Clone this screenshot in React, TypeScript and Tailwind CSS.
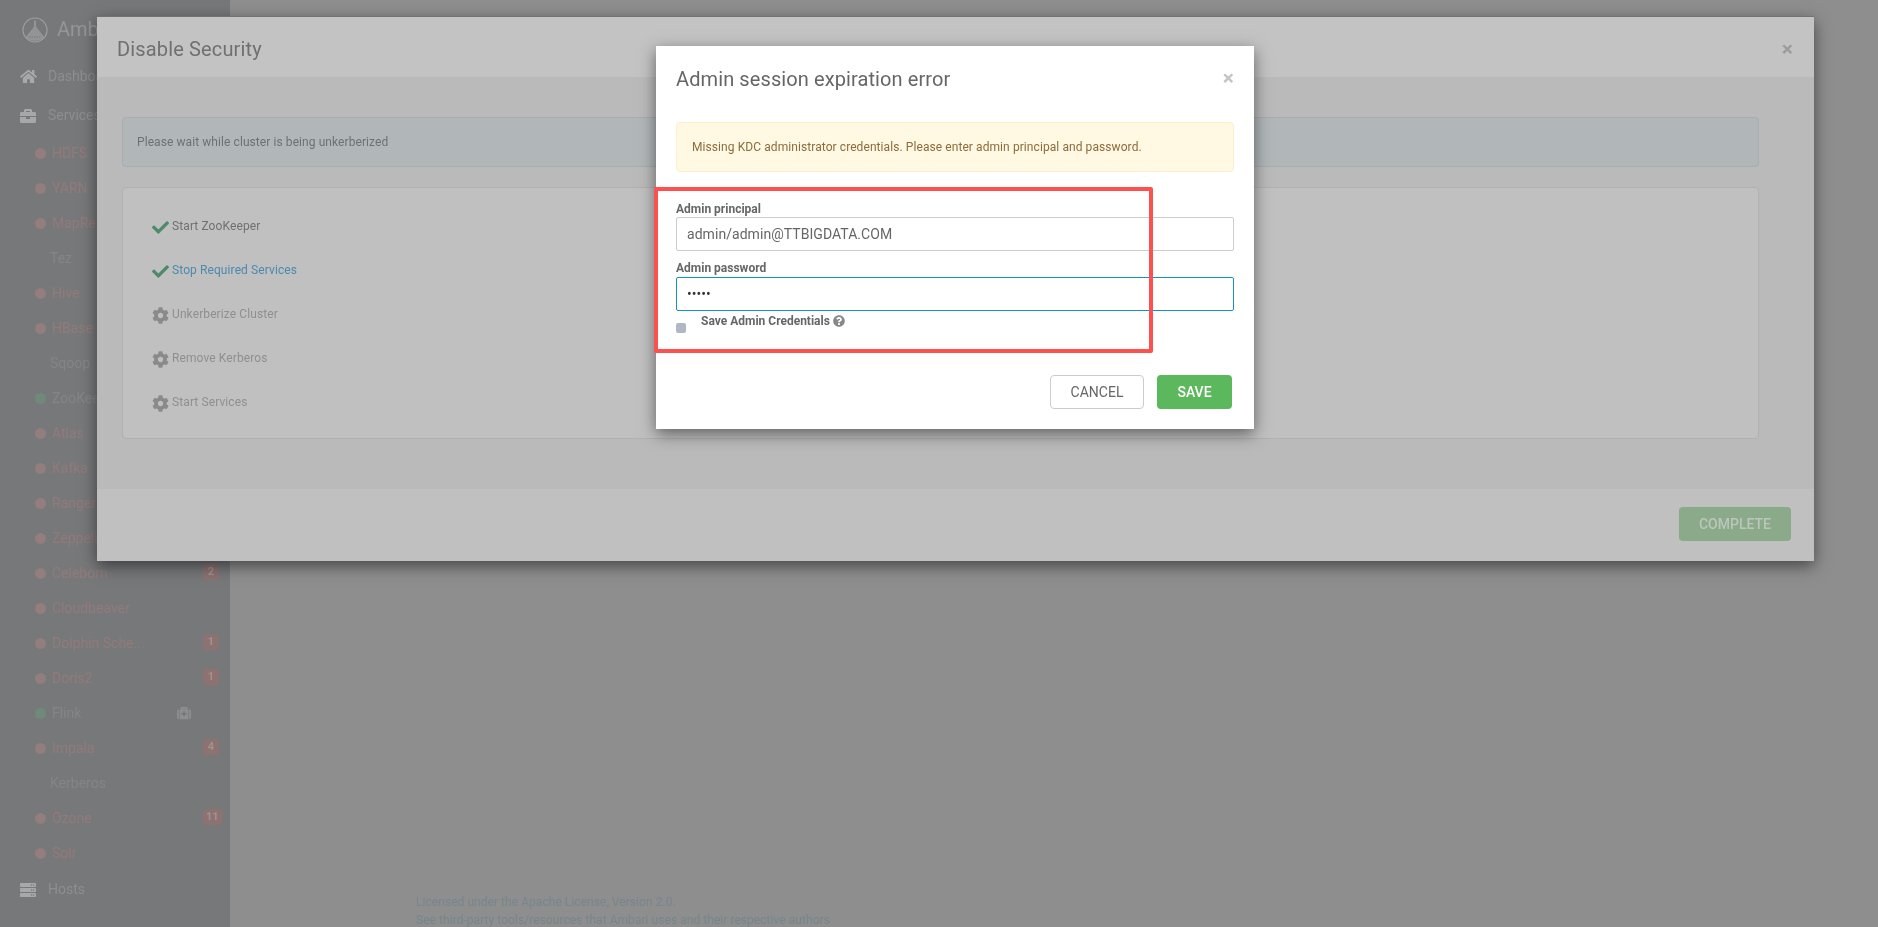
import { FaHome, FaBriefcase, FaServer, FaCheck, FaCog, FaMedkit, FaQuestionCircle } from "react-icons/fa";

type Svc = { name: string; state: "red" | "green" | "none"; badge?: string; medkit?: boolean };

const services: Svc[] = [
  { name: "HDFS", state: "red" },
  { name: "YARN", state: "red" },
  { name: "MapReduce2", state: "red" },
  { name: "Tez", state: "none" },
  { name: "Hive", state: "red" },
  { name: "HBase", state: "red" },
  { name: "Sqoop", state: "none" },
  { name: "ZooKeeper", state: "green" },
  { name: "Atlas", state: "red" },
  { name: "Kafka", state: "red" },
  { name: "Ranger", state: "red" },
  { name: "Zeppelin", state: "red" },
  { name: "Celeborn", state: "red", badge: "2" },
  { name: "Cloudbeaver", state: "red" },
  { name: "Dolphin Sche...", state: "red", badge: "1" },
  { name: "Doris2", state: "red", badge: "1" },
  { name: "Flink", state: "green", medkit: true },
  { name: "Impala", state: "red", badge: "4" },
  { name: "Kerberos", state: "none" },
  { name: "Ozone", state: "red", badge: "11" },
  { name: "Solr", state: "red" },
];

function ServiceRow({ s }: { s: Svc }) {
  return (
    <div className="relative flex h-[35px] items-center">
      {s.state === "none" ? (
        <span className="pl-[50px] text-[#858585]">{s.name}</span>
      ) : (
        <>
          <span className={`ml-[35px] mr-[6px] h-[11px] w-[11px] shrink-0 rounded-full ${s.state === "red" ? "bg-[#937d7d]" : "bg-[#6f8a7b]"}`} />
          <span className={s.state === "red" ? "text-[#937a7a]" : "text-[#858585]"}>{s.name}</span>
        </>
      )}
      {s.badge && (
        <span className="absolute left-[203px] top-[8px] flex h-4 min-w-4 items-center justify-center rounded-[3px] bg-[#8d7272] px-[3px] text-[11px] font-bold text-[#a69090]">
          {s.badge}
        </span>
      )}
      {s.medkit && <FaMedkit className="absolute left-[177px] top-[10px] text-[14px] text-[#8f8f8f]" />}
    </div>
  );
}

function Sidebar() {
  return (
    <aside className="flex h-[927px] w-[230px] shrink-0 flex-col overflow-hidden bg-[#77787a] text-[14px]">
      <div className="flex h-[55px] items-center pl-[22px] pt-[1px]">
        <svg width="26" height="26" viewBox="0 0 26 26" fill="none" className="mt-[4px] text-[#a0a0a0]">
          <circle cx="13" cy="13" r="12" stroke="currentColor" strokeWidth="1.1" />
          <path d="M13 3.5 V8" stroke="currentColor" strokeWidth="1.4" />
          <path d="M13 6.5 L15 11 L19 16 Q22 19 22 21 Q18 24 13 24 Q8 24 4 21 Q4 19 7 16 L11 11 Z" fill="currentColor" fillOpacity="0.7" />
          <path d="M7 20 H19" stroke="#77787a" strokeWidth="1.2" strokeDasharray="1.5 1" />
        </svg>
        <span className="ml-[9px] mt-[1px] text-[20px] text-[#969696]">Ambari</span>
      </div>
      <div className="flex h-[42px] items-center pl-[20px] text-[#8c8e92]">
        <FaHome className="mr-[11px] text-[17px] text-[#a8a8a8]" />
        Dashboard
      </div>
      <div className="flex h-[37px] items-center pl-[20px] text-[#8c8e92]">
        <FaBriefcase className="mr-[12px] text-[16px] text-[#a8a8a8]" />
        Services
      </div>
      <div className="h-[2px]" />
      {services.map((s) => (
        <ServiceRow key={s.name} s={s} />
      ))}
      <div className="flex h-[37px] items-center pl-[20px] text-[#8c8e92]">
        <FaServer className="mr-[12px] text-[16px] text-[#a8a8a8]" />
        Hosts
      </div>
    </aside>
  );
}

function Step({ label, kind }: { label: string; kind: "done" | "active" | "todo" }) {
  const color = kind === "done" ? "text-[#707070]" : kind === "active" ? "text-[#4a8aae]" : "text-[#8f8f8f]";
  return (
    <div className="flex h-[44px] items-center">
      {kind === "todo" ? (
        <FaCog className="mt-[2px] w-[19px] text-[17px] text-[#8a8a8a]" />
      ) : (
        <FaCheck className="mt-[2px] w-[19px] text-[17px] text-[#4d8a6a]" />
      )}
      <span className={`ml-[2px] text-[12px] tracking-[0.1px] ${color}`}>{label}</span>
    </div>
  );
}

function OuterModal() {
  return (
    <div className="absolute left-[97px] top-[16px] flex h-[545px] w-[1717px] flex-col border-t border-[#737373] bg-[#bababa] shadow-[0_5px_15px_rgba(0,0,0,0.5)]">
      <div className="flex h-[60px] items-center justify-between bg-[#c3c3c3] pl-[20px] pr-[21px] pt-[4px]">
        <span className="text-[20px] tracking-[0.15px] text-[#707070]">Disable Security</span>
        <span className="text-[21px] font-bold leading-none text-[#9c9c9c]">×</span>
      </div>
      <div className="flex-1 px-[25px] pt-[40px]">
        <div className="flex h-[50px] w-[1637px] items-center rounded-[4px] border border-[#a8adb0] bg-[#b1b6b9] pl-[14px] text-[12px] tracking-[0.08px] text-[#6c7274]">
          Please wait while cluster is being unkerberized
        </div>
        <div className="mt-[20px] h-[252px] w-[1637px] rounded-[4px] border border-[#b0b0b0] bg-[#c0c0c0] pl-[28px] pt-[16px]">
          <Step label="Start ZooKeeper" kind="done" />
          <Step label="Stop Required Services" kind="active" />
          <Step label="Unkerberize Cluster" kind="todo" />
          <Step label="Remove Kerberos" kind="todo" />
          <Step label="Start Services" kind="todo" />
        </div>
      </div>
      <div className="flex h-[72px] items-center justify-end bg-[#c0c0c0] pb-[2px] pr-[23px]">
        <div className="flex h-[34px] w-[112px] items-center justify-center rounded-[4px] bg-[#8aaa8a] text-[14px] font-medium text-[#bcc6bc]">
          COMPLETE
        </div>
      </div>
    </div>
  );
}

function InnerModal() {
  return (
    <div className="absolute left-[656px] top-[46px] h-[383px] w-[598px] bg-white px-[20px] shadow-[0_5px_15px_rgba(0,0,0,0.5)]">
      <div className="flex h-[66px] items-center justify-between pb-[1px]">
        <span className="text-[20px] tracking-[0.1px] text-[#666666]">Admin session expiration error</span>
        <span className="text-[21px] font-bold leading-none text-[#c4c4c4]">×</span>
      </div>
      <div className="mt-[10px] flex h-[50px] w-[558px] items-center rounded-[4px] border border-[#fbeecb] bg-[#fff8e3] pl-[15px] text-[12px] tracking-[0.08px] text-[#8b6d3b]">
        Missing KDC administrator credentials. Please enter admin principal and password.
      </div>
      <div className="mt-[29px] text-[12px] font-bold leading-[16px] text-[#666666]">Admin principal</div>
      <input
        readOnly
        value="admin/admin@TTBIGDATA.COM"
        className="block h-[34px] w-[558px] rounded-[2px] border border-[#cccccc] bg-white px-[10px] text-[14px] tracking-[0.05px] text-[#666666] outline-none"
      />
      <div className="mt-[9px] text-[12px] font-bold leading-[16px] text-[#666666]">Admin password</div>
      <input
        readOnly
        type="password"
        value="admin"
        className="mt-[1px] block h-[34px] w-[558px] rounded-[2px] border border-[#1491c1] bg-white px-[10px] text-[14px] text-[#333333] outline-none"
      />
      <div className="relative mt-[1px] flex h-[18px] items-center pl-[25px] text-[12px] font-bold text-[#666666]">
        <span className="absolute left-0 top-[11px] h-[10px] w-[10px] rounded-[2px] bg-[#b1b8c4]" />
        Save Admin Credentials
        <FaQuestionCircle className="ml-[3px] text-[12px] text-[#888888]" />
      </div>
      <div className="mt-[45px] flex justify-end gap-[13px] pr-[2px]">
        <div className="flex h-[34px] w-[94px] items-center justify-center rounded-[4px] border border-[#cccccc] bg-white text-[14px] text-[#666666]">
          CANCEL
        </div>
        <div className="flex h-[34px] w-[75px] items-center justify-center rounded-[4px] bg-[#5cb85c] text-[14px] font-medium text-white">
          SAVE
        </div>
      </div>
    </div>
  );
}

export default function App() {
  return (
    <div className="relative h-[927px] w-[1878px] overflow-hidden bg-[#8e8e8e] font-['Roboto',sans-serif] blur-[0.35px]">
      <div className="flex">
        <Sidebar />
        <main className="flex h-[927px] flex-1 flex-col justify-end pl-[186px]">
          <div className="mb-[-2px] text-[12px] leading-[18px] tracking-[0.05px] text-[#76868c]">
            <div>Licensed under the Apache License, Version 2.0.</div>
            <div>See third-party tools/resources that Ambari uses and their respective authors</div>
          </div>
        </main>
      </div>
      <OuterModal />
      <InnerModal />
      <div className="absolute left-[654px] top-[187px] h-[166px] w-[499px] rounded-[2px] border-4 border-[#ff5050]" />
    </div>
  );
}
